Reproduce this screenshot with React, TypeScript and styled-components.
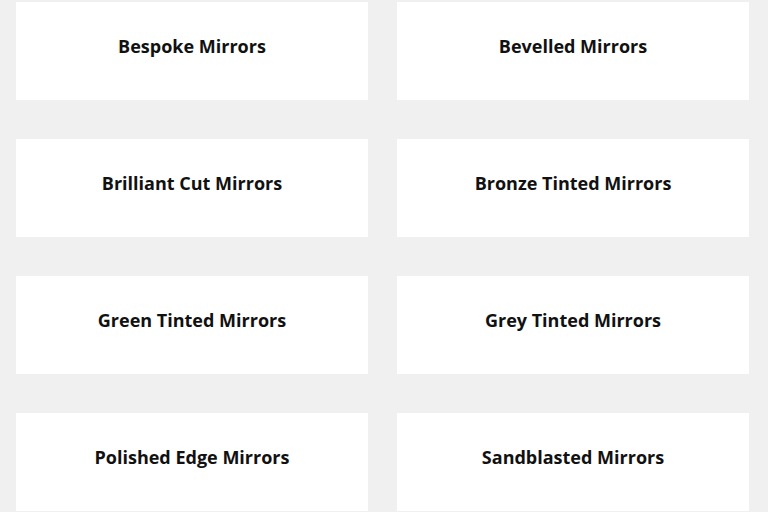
import React from "react";
import styled, { createGlobalStyle } from "styled-components";

const GlobalStyle = createGlobalStyle`
  html, body {
    margin: 0;
    padding: 0;
    background: #f0f0f0;
  }
`;

const Page = styled.div`
  display: grid;
  grid-template-columns: 352px 352px;
  column-gap: 29px;
  row-gap: 39px;
  padding: 2px 0 0 16px;
  font-family: "Open Sans", "Liberation Sans", sans-serif;
`;

const Card = styled.a`
  display: flex;
  align-items: center;
  justify-content: center;
  height: 98px;
  padding-bottom: 8px;
  box-sizing: border-box;
  background: #ffffff;
  color: #111111;
  text-decoration: none;
`;

const Title = styled.h3`
  margin: 0;
  font-size: 18px;
  font-weight: 700;
  line-height: 1.2;
`;

const items = [
  "Bespoke Mirrors",
  "Bevelled Mirrors",
  "Brilliant Cut Mirrors",
  "Bronze Tinted Mirrors",
  "Green Tinted Mirrors",
  "Grey Tinted Mirrors",
  "Polished Edge Mirrors",
  "Sandblasted Mirrors",
];

const App: React.FC = () => {
  return (
    <>
      <GlobalStyle />
      <Page>
        {items.map((name) => (
          <Card key={name} href="#">
            <Title>{name}</Title>
          </Card>
        ))}
      </Page>
    </>
  );
};

export default App;
